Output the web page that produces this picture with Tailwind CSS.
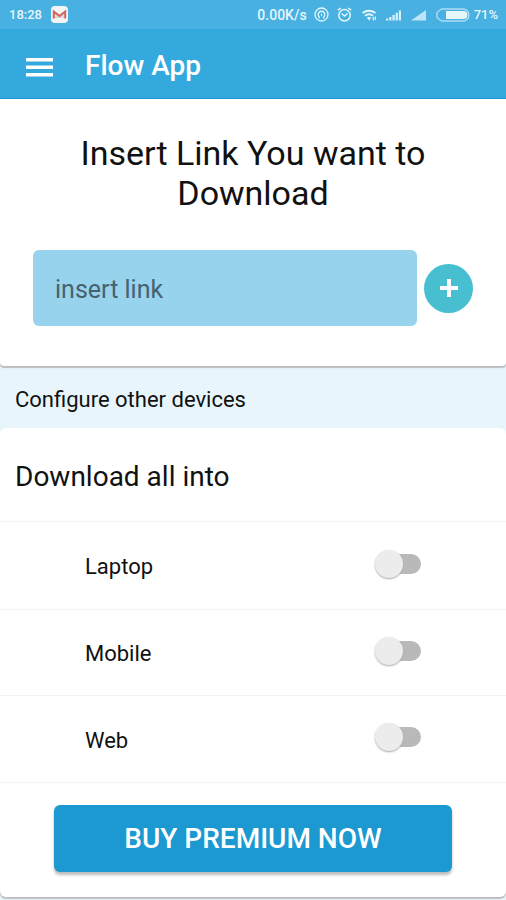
<!DOCTYPE html>
<html lang="en">
<head>
<meta charset="utf-8">
<meta name="viewport" content="width=device-width, initial-scale=1">
<title>Flow App</title>
<script src="https://cdn.jsdelivr.net/npm/@tailwindcss/browser@4"></script>
</head>
<body class="min-h-screen bg-[#e8f6fc] font-['Roboto',sans-serif] text-[#111]">
<div class="flex h-[29px] items-center justify-between bg-[#48b1e1] pr-2 pl-[9px] text-[13px] font-medium text-[#e6f6fd]">
  <div class="flex items-center gap-[9px]">
    <span class="pt-px">18:28</span>
    <svg class="size-[17px]" viewBox="0 0 17 17" aria-hidden="true"><rect width="17" height="17" rx="4" fill="#f4f3f5"/><path d="M4 6l4.500 4L13 6v6H4z" fill="#dcd6d9"/><path d="M2.800 12.500V5.500l5.700 4.500 5.700-4.500v7" fill="none" stroke="#d2635f" stroke-width="2"/></svg>
  </div>
  <div class="flex items-center">
    <span class="pt-px text-sm">0.00K/s</span>
    <svg class="ml-[7px] size-[15px]" viewBox="0 0 15 15" fill="none" stroke="currentColor" aria-hidden="true"><circle cx="7.500" cy="7.500" r="6.500" stroke-width="1.300"/><path d="M5.300 11.500V10a3.300 3.300 0 1 1 4.400 0v1.500" stroke-width="1.300"/><path d="M7.500 6.500v2.500" stroke-width="1"/></svg>
    <svg class="ml-2 size-[15px]" viewBox="0 0 15 15" fill="none" stroke="currentColor" stroke-width="1.500" aria-hidden="true"><circle cx="7.500" cy="8.300" r="5.700"/><path d="M4.500 6.500l3 2.500 3-2.500M.8 3.200l3-2.200M14.200 3.200l-3-2.200"/></svg>
    <svg class="ml-[9px] h-[13px] w-[17px]" viewBox="0 0 17 13" fill="none" stroke="currentColor" aria-hidden="true"><path d="M1.500 5q6.500-4.500 13 0M4 7.800q4-3 8 0" stroke-width="2"/><path d="M5.800 9.800q2.200-1.500 4.400 0L8 12.500z" fill="currentColor" stroke="none"/><path d="M12.300 12.500V9M14.300 8.500V12" stroke-width="1.200"/></svg>
    <svg class="ml-2 h-[13px] w-[16px]" viewBox="0 0 16 13" fill="currentColor" aria-hidden="true"><path d="M0 10.500h2.300v2H0zM3.200 9h2.300v3.500H3.200zM6.400 7h2.300v5.500H6.400zM9.600 4.800h2.300v7.700H9.600zM12.800 2.500h2.200v10h-2.200z" opacity=".9"/></svg>
    <svg class="ml-[9px] h-[13px] w-[16px]" viewBox="0 0 16 13" fill="currentColor" aria-hidden="true"><path d="M15 2v10.500H0z" opacity=".75"/></svg>
    <svg class="ml-2 h-[14px] w-[35px]" viewBox="0 0 35 14" aria-hidden="true"><path d="M6.500 1H28a6 6 0 0 1 0 12H6.500L2 9.500v-5z" fill="none" stroke="#aadcf3" stroke-width="1.500" stroke-linejoin="round"/><path d="M11 3h17.500a4 4 0 0 1 0 8H11z" fill="#e6f6fd"/></svg>
    <span class="ml-1 pt-px">71%</span>
  </div>
</div>
<header class="flex h-[70px] items-center border-b border-[#1f97d0] bg-[#34a9dd] px-[26px] pt-1 text-white">
  <button type="button" aria-label="Open menu" class="mr-8 w-[27px] pt-1">
    <svg class="h-[20px] w-[27px]" viewBox="0 0 27 20" fill="currentColor" aria-hidden="true"><path d="M0 0h27v3.500H0zM0 7.500h27V11H0zM0 15h27v3.500H0z"/></svg>
  </button>
  <h1 class="text-[28px] leading-8 font-medium">Flow App</h1>
</header>
<main>
  <section class="rounded-b bg-white px-[33px] pt-[34px] pb-10 shadow-[0_2px_1px_#bdbdc0]">
    <h2 class="px-8 text-center text-[34px] leading-10">Insert Link You want to Download</h2>
    <form class="mt-[37px] flex items-center gap-[7px]">
      <input type="text" aria-label="Link" placeholder="insert link" class="h-[76px] min-w-0 flex-1 rounded-md bg-[#98d3ee] px-[22px] pt-[2px] text-[25px] text-[#222] placeholder:text-[#46626f]">
      <button type="button" aria-label="Add link" class="flex size-[49px] items-center justify-center rounded-full bg-[#48bfd0] text-white">
        <svg class="size-[18px]" viewBox="0 0 18 18" fill="none" stroke="currentColor" stroke-width="4" aria-hidden="true"><path d="M9 0v18M0 9h18"/></svg>
      </button>
    </form>
  </section>
  <h2 class="px-[15px] pt-5 pb-[14px] text-[22px] leading-7">Configure other devices</h2>
  <section class="rounded-md bg-white shadow-[0_2px_1px_#bdbdc0]">
    <h3 class="flex h-[94px] items-center border-b border-[#f3f3f4] px-[15px] pt-1 text-[28px]">Download all into</h3>
    <label class="flex h-[88px] items-center justify-between border-b border-[#f3f3f4] px-[85px] pb-1 text-[22px]"><span class="pt-1.5">Laptop</span>
      <input type="checkbox" role="switch" class="relative h-5 w-[42px] appearance-none rounded-full bg-[#b9b9b9] before:absolute before:-top-1 before:-left-1 before:size-7 before:rounded-full before:bg-[#ececec] before:shadow-[0_1px_2px_#aaa] checked:before:left-5"></label>
    <label class="flex h-[86px] items-center justify-between border-b border-[#f3f3f4] px-[85px] pb-1 text-[22px]"><span class="pt-1.5">Mobile</span>
      <input type="checkbox" role="switch" class="relative h-5 w-[42px] appearance-none rounded-full bg-[#b9b9b9] before:absolute before:-top-1 before:-left-1 before:size-7 before:rounded-full before:bg-[#ececec] before:shadow-[0_1px_2px_#aaa] checked:before:left-5"></label>
    <label class="flex h-[87px] items-center justify-between border-b border-[#f3f3f4] px-[85px] pb-1 text-[22px]"><span class="pt-1.5">Web</span>
      <input type="checkbox" role="switch" class="relative h-5 w-[42px] appearance-none rounded-full bg-[#b9b9b9] before:absolute before:-top-1 before:-left-1 before:size-7 before:rounded-full before:bg-[#ececec] before:shadow-[0_1px_2px_#aaa] checked:before:left-5"></label>
    <div class="px-[54px] pt-[22px] pb-[25px]">
      <button type="button" class="h-[67px] w-full rounded-md bg-[#1b99d0] pt-px text-[28px] font-medium text-white shadow-[0_3px_3px_#bcbcbc]">BUY PREMIUM NOW</button>
    </div>
  </section>
</main>
</body>
</html>
